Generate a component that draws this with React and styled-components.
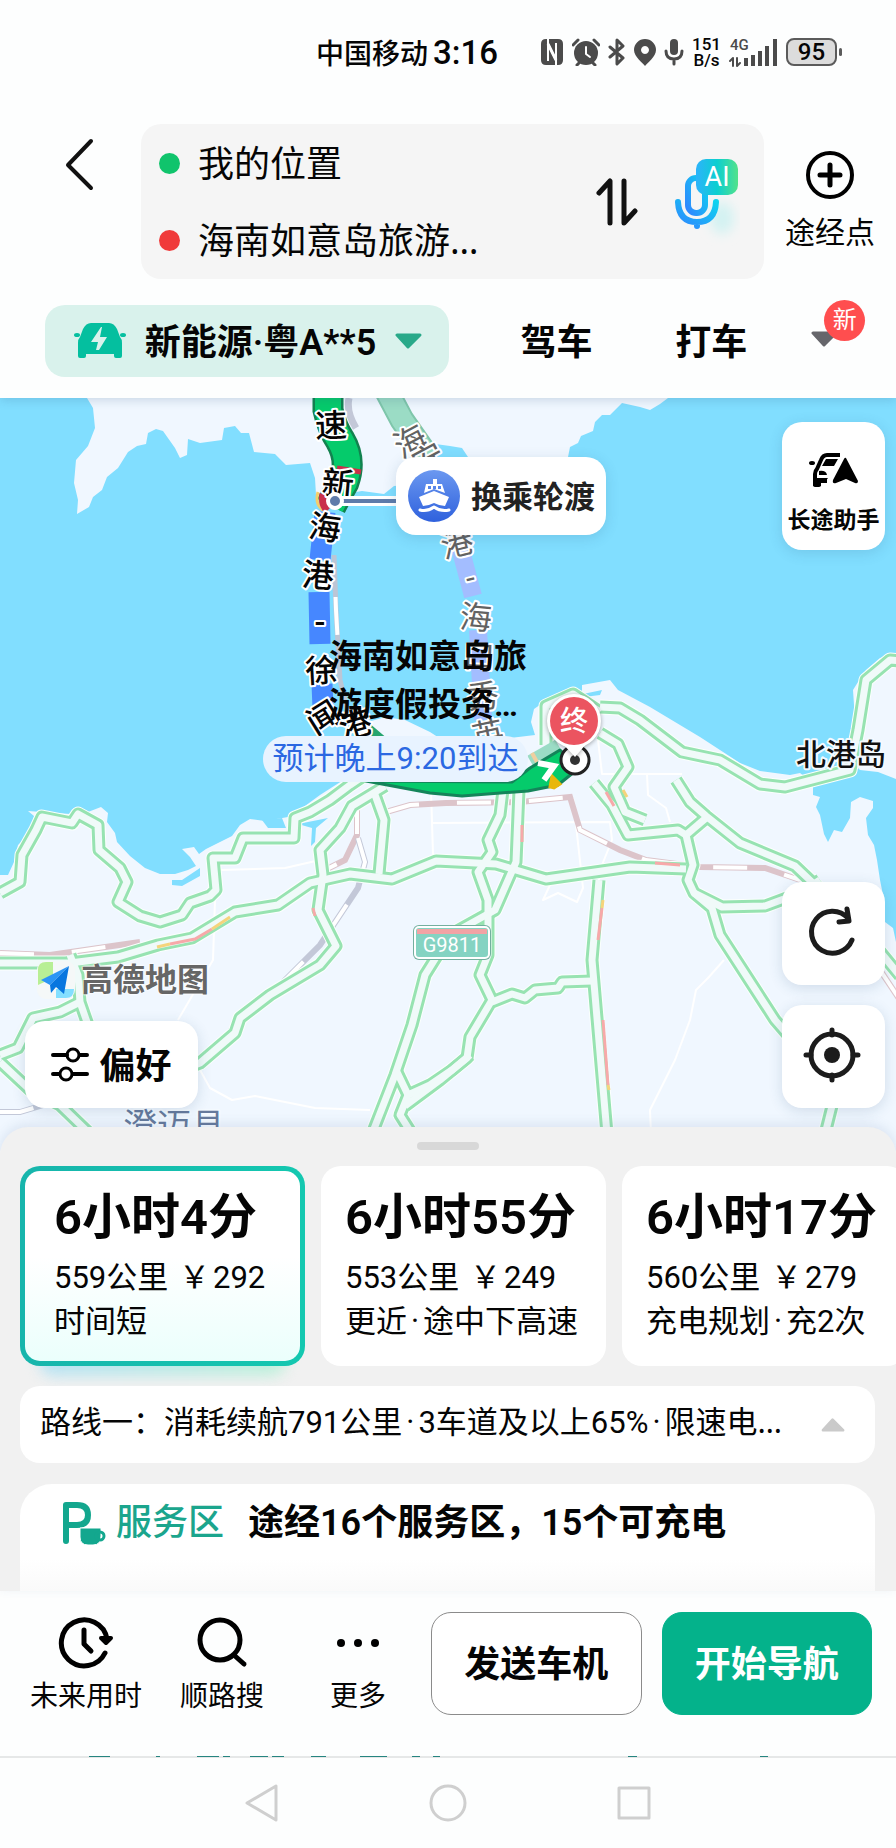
import React from "react";
import styled, { createGlobalStyle, css } from "styled-components";

const GlobalStyle = createGlobalStyle`
  * { box-sizing: border-box; }
  body {
    margin: 0;
    background: #fdfefe;
    color: #050505;
    font-family: Roboto, "Noto Sans CJK SC", sans-serif;
  }
  button {
    font: inherit;
    color: inherit;
    background: none;
    border: 0;
    padding: 0;
    cursor: pointer;
  }
  svg { display: block; flex: none; }
  h2, p { margin: 0; }
`;

const Page = styled.div`
  display: flex;
  flex-direction: column;
  min-height: 100vh;
  overflow: hidden;
`;

/* ---------- status bar ---------- */

const StatusBar = styled.div`
  display: flex;
  align-items: center;
  justify-content: flex-end;
  height: 104px;
  padding-right: 54px;
  color: #4b4b4b;
`;

const Carrier = styled.span`
  font-size: 28px;
  font-weight: 500;
  color: #050505;
`;

const Clock = styled.time`
  margin: 0 42px 0 5px;
  font-size: 33px;
  font-weight: 500;
  color: #050505;
`;

const StatusIcons = styled.div`
  display: flex;
  align-items: center;
  gap: 8px;
`;

const NetSpeed = styled.span`
  display: flex;
  flex-direction: column;
  font-size: 17px;
  font-weight: 500;
  line-height: 16px;
  text-align: center;
  color: #050505;
`;

const Battery = styled.span`
  position: relative;
  width: 51px;
  height: 28px;
  margin-right: 5px;
  border: 2px solid #5b5b5b;
  border-radius: 8px;
  background: #dcdcdc;
  font-size: 24px;
  font-weight: 500;
  line-height: 25px;
  text-align: center;
  color: #050505;
  &::after {
    content: "";
    position: absolute;
    right: -7px;
    top: 8px;
    width: 3px;
    height: 8px;
    border-radius: 2px;
    background: #5b5b5b;
  }
`;

/* ---------- header ---------- */

const Header = styled.header`
  position: relative;
  z-index: 2;
  background: #fdfefe;
  box-shadow: 0 2px 10px rgba(40, 80, 120, 0.2);
`;

const SearchRow = styled.div`
  display: flex;
  padding-top: 20px;
`;

const BackButton = styled.button`
  width: 141px;
  height: 82px;
  padding-left: 65px;
`;

const Places = styled.div`
  flex: 1;
  display: flex;
  align-items: center;
  min-width: 0;
  height: 155px;
  padding: 0 24px 0 18px;
  border-radius: 20px;
  background: #f5f5f5;
`;

const Fields = styled.div`
  flex: 1;
  min-width: 0;
`;

const Field = styled.label`
  display: flex;
  align-items: center;
  gap: 18px;
  height: 77px;
  &::before {
    content: "";
    width: 21px;
    height: 21px;
    border-radius: 50%;
    background: ${(p) => p.$dot};
  }
`;

const PlaceInput = styled.input`
  flex: 1;
  min-width: 0;
  padding: 0 0 4px;
  border: 0;
  outline: 0;
  background: none;
  color: inherit;
  font-family: "Noto Sans", "Noto Sans CJK SC", sans-serif;
  font-size: 36px;
`;

const IconButton = styled.button`
  margin-left: ${(p) => p.$gap || 0}px;
`;

const Waypoint = styled.button`
  display: flex;
  flex-direction: column;
  align-items: center;
  gap: 12px;
  width: 132px;
  padding-top: 27px;
  font-size: 30px;
  line-height: 44px;
`;

const ModeRow = styled.nav`
  display: flex;
  align-items: center;
  padding: 26px 36px 21px 45px;
`;

const VehiclePill = styled.button`
  display: flex;
  align-items: center;
  justify-content: space-between;
  width: 404px;
  height: 72px;
  padding: 0 27px 0 29px;
  border-radius: 20px;
  background: #d9f2ec;
`;

const Strong = styled.span`
  padding-bottom: 4px;
  font-size: 36px;
  font-weight: 600;
`;

const Modes = styled.div`
  display: flex;
  flex: 1;
  margin-left: 30px;
`;

const Mode = styled.button`
  flex: 154 0 0;
  padding-bottom: 4px;
  font-size: 36px;
  font-weight: 600;
`;

const MoreModes = styled.button`
  position: relative;
  display: flex;
  flex: 71 0 0;
  align-items: center;
  justify-content: center;
  padding-bottom: 4px;
`;

const NewBadge = styled.span`
  position: absolute;
  left: 50%;
  bottom: 50%;
  width: 41px;
  height: 41px;
  border-radius: 50%;
  background: #ff4e4f;
  color: #fff;
  font-size: 24px;
  line-height: 40px;
  text-align: center;
`;

/* ---------- map ---------- */

const Map = styled.main`
  position: relative;
  display: flex;
  justify-content: space-between;
  height: 753px;
  padding: 24px 11px 43px 25px;
  background: #f0f7ff;
`;

const MapCanvas = styled.svg`
  position: absolute;
  inset: 0;
  width: 100%;
  height: 100%;
`;

const Floating = css`
  position: relative;
  background: #fff;
  border-radius: 20px;
  box-shadow: 0 3px 14px rgba(40, 80, 120, 0.16);
`;

const LeftTools = styled.div`
  display: flex;
  flex-direction: column;
  align-items: flex-start;
  justify-content: flex-end;
  gap: 21px;
`;

const Brand = styled.div`
  position: relative;
  display: flex;
  align-items: center;
  gap: 6px;
  padding-left: 12px;
  color: #666;
  font-size: 32px;
  font-weight: 600;
  line-height: 40px;
  text-shadow: 0 0 2px #fff, 0 0 2px #fff, 0 0 3px #fff;
`;

const Preference = styled.button`
  ${Floating}
  display: flex;
  align-items: center;
  justify-content: center;
  gap: 10px;
  width: 173px;
  height: 87px;
`;

const RightTools = styled.div`
  display: flex;
  flex-direction: column;
  gap: 20px;
`;

const Assistant = styled.button`
  ${Floating}
  display: flex;
  flex-direction: column;
  align-items: center;
  gap: 16px;
  width: 103px;
  height: 128px;
  margin-bottom: auto;
  padding-top: 30px;
  font-size: 23px;
  font-weight: 600;
  line-height: 36px;
`;

const MapButton = styled.button`
  ${Floating}
  display: flex;
  align-items: center;
  justify-content: center;
  width: 103px;
  height: 103px;
  padding: 0 3px 3px 0;
`;

const FerryTip = styled.button`
  ${Floating}
  position: absolute;
  left: calc(50% - 52px);
  top: 59px;
  display: flex;
  align-items: center;
  gap: 10px;
  width: 210px;
  height: 78px;
  padding-left: 12px;
  color: #222;
  white-space: nowrap;
`;

const FerryText = styled.span`
  padding-bottom: 4px;
  font-size: 31px;
  font-weight: 600;
`;

const Arrival = styled.p`
  position: absolute;
  left: calc(50% - 185px);
  top: 338px;
  width: 265px;
  border-radius: 23px;
  background: #e8f3ff;
  color: #2b68e2;
  font-size: 31px;
  line-height: 46px;
  text-align: center;
  white-space: nowrap;
`;

/* ---------- bottom sheet ---------- */

const Sheet = styled.section`
  position: relative;
  margin-top: -24px;
  padding-top: 15px;
  border-radius: 28px 28px 0 0;
  background: #f1f1f1;
  box-shadow: 0 -3px 12px rgba(60, 90, 140, 0.12);
`;

const Handle = styled.div`
  width: 62px;
  height: 8px;
  margin: 0 auto 16px;
  border-radius: 4px;
  background: #d8d8d8;
`;

const Routes = styled.div`
  display: flex;
  gap: 16px;
  padding: 0 20px 20px;
  overflow-x: auto;
  scrollbar-width: none;
  isolation: isolate;
`;

const RouteCard = styled.button`
  position: relative;
  flex: none;
  width: 285px;
  height: 200px;
  padding: 0 24px;
  border-radius: 20px;
  background: #fff;
  text-align: left;
  white-space: nowrap;
  ${(p) =>
    p.$selected &&
    css`
      padding: 0 29px;
      border: 5px solid transparent;
      background: linear-gradient(#fff 45%, #ebfffc) padding-box,
        linear-gradient(90deg, #17b5ac, #14c8b0) border-box;
      &::after {
        content: "";
        position: absolute;
        z-index: -1;
        left: 14px;
        right: 14px;
        bottom: -15px;
        height: 30px;
        border-radius: 15px;
        background: linear-gradient(90deg, #b8e2f3, #bff0da);
        filter: blur(7px);
      }
    `}
`;

const Duration = styled.h2`
  margin-bottom: 8px;
  font-size: 49px;
  font-weight: 600;
  line-height: 60px;
`;

const RouteInfo = styled.p`
  font-size: 31px;
  line-height: 44px;
`;

const Price = styled.span`
  margin-left: 3px;
`;

const Yen = styled.span`
  margin-right: 3px;
`;

const Separator = styled.span`
  margin: 0 4px;
`;

const Ellipsis = styled.span`
  font-family: "Noto Sans", sans-serif;
  line-height: 1;
`;

const Summary = styled.button`
  display: flex;
  align-items: center;
  justify-content: space-between;
  width: calc(100% - 41px);
  height: 77px;
  margin: 0 21px 21px 20px;
  padding: 0 30px 0 20px;
  border-radius: 20px;
  background: #fff;
  white-space: nowrap;
`;

const SummaryText = styled.span`
  padding-bottom: 4px;
  font-size: 31px;
  line-height: 44px;
`;

const Service = styled.div`
  display: flex;
  align-items: flex-start;
  height: 107px;
  margin: 0 21px 0 20px;
  padding: 14px 42px;
  border-radius: 32px 32px 0 0;
  background: linear-gradient(#fff 70%, #fafafa);
  font-size: 36px;
  font-weight: 600;
  line-height: 50px;
  white-space: nowrap;
`;

const ServiceTag = styled.span`
  display: flex;
  align-items: center;
  gap: 10px;
  margin-right: 24px;
  color: #1ba58d;
  font-weight: 500;
`;

/* ---------- action bar ---------- */

const ActionBar = styled.footer`
  display: flex;
  align-items: flex-start;
  height: 165px;
  padding: 21px 24px 0 18px;
  background: #fdfefe;
`;

const Action = styled.button`
  display: flex;
  flex-direction: column;
  align-items: center;
  gap: 7px;
  width: 136px;
  padding-top: 4px;
  font-size: 28px;
  line-height: 40px;
`;

const MainButton = styled.button`
  flex: 1;
  height: 103px;
  margin-left: ${(p) => (p.$primary ? 20 : 5)}px;
  padding-bottom: 6px;
  border: 1px solid ${(p) => (p.$primary ? "#04b28b" : "#8b8b8b")};
  border-radius: 20px;
  background: ${(p) => (p.$primary ? "#04b28b" : "#fff")};
  color: ${(p) => (p.$primary ? "#fff" : "#050505")};
  font-size: 36px;
  font-weight: 600;
`;

const PeekLine = styled.svg`
  width: 100%;
  height: 2px;
  background: #e6e8e8;
`;

const SystemNav = styled.nav`
  display: flex;
  flex: 1;
  align-items: center;
  justify-content: center;
  gap: 146px;
  min-height: 90px;
  background: #fdfefe;
`;

const SystemKey = styled.button`
  display: flex;
  justify-content: center;
  width: 40px;
`;

/* ---------- map data ---------- */

const roads = [
  "0,893 20,882 22,855 36,830 42,817 72,823 78,814 98,825 99,850 120,868 127,882 118,902 140,916 160,922 182,915 190,903 210,896 216,890 213,858 235,858 243,838 294,838 295,818 310,812 330,800 350,785 375,768",
  "0,963 70,963 118,957 158,945 192,938 235,912 278,905 310,883 350,874 392,879 436,861 496,864 546,879 630,867 686,869",
  "385,786 352,806 340,828 320,850 323,875 318,910 336,946 320,965 270,995 240,1018 235,1033 200,1063 170,1075",
  "374,792 384,820 379,874",
  "503,790 500,815 488,840 492,852 478,872 488,900 488,955 480,975 492,1000 470,1037 467,1058 440,1080 405,1106",
  "519,790 516,862 495,910 450,935 425,975 412,1025 395,1075 372,1134",
  "599,880 592,960 607,1134",
  "397,1072 408,1095 430,1085 452,1070 470,1055",
  "408,1095 400,1115 412,1134",
  "492,1002 512,994 525,998 535,990 558,988 562,982 592,981",
  "600,707 620,708 640,720 682,752 720,760 760,784 785,787 850,770 858,730 866,680 890,660 900,661",
  "546,745 546,706 573,694 600,712",
  "600,733 618,744 628,767 614,787 625,812 645,820",
  "594,783 612,805 628,835 678,830 686,835 693,865 688,880 694,893 712,908 720,935 775,1020 840,1095",
  "676,780 690,802 706,816 740,843 795,866 815,885 850,915 900,976",
  "706,818 686,835",
  "694,893 722,907 765,906 800,893 820,880",
  "70,955 78,975 80,1002 88,1025",
  "0,1055 18,1048 33,1018 60,1012 82,1001",
  "0,1062 30,1090 60,1105 90,1134",
  "836,1090 825,1134",
];

const traffic = [
  ["#f7a9a9", "170,944 195,939 212,929"],
  ["#f5d47c", "157,947 170,944"],
  ["#f5d47c", "212,929 230,917"],
  ["#f7a9a9", "602,908 598,940"],
  ["#f5d47c", "603,900 602,908"],
  ["#f7a9a9", "603,1020 608,1085"],
  ["#f5d47c", "608,1085 609,1090"],
  ["#f7a9a9", "655,863 680,865"],
  ["#f7a9a9", "606,792 614,806"],
  ["#f5d47c", "623,790 627,797"],
  ["#f7a9a9", "313,908 315,916"],
  ["#f7a9a9", "522,825 522,842"],
];

const railways = [
  ["#dcc4ca", "0,953 50,955 140,942"],
  ["#dcc4ca", "357,800 357,835 345,860 325,870"],
  ["#dcc4ca", "386,812 410,805 446,803 520,802 570,797 580,830 620,850 646,860 700,867 765,868 800,880"],
  ["#dcc4ca", "880,970 900,1000"],
  ["#c3c8d8", "358,838 365,862 358,888 320,945 280,985 245,1010 228,1035 200,1058"],
  ["#c3c8d8", "0,1112 20,1112 50,1103"],
];

const lanes = [
  "220,870 285,868 320,860",
  "215,900 213,960 178,1020",
  "200,1070 210,1088 232,1100 255,1096 315,1108 370,1110",
  "431,790 433,855",
  "433,823 610,822 612,840 600,870 598,890",
  "573,798 583,888 577,902 558,893 543,900 550,885",
  "598,740 602,774 682,774",
  "647,774 648,795 666,808 670,822",
  "724,960 708,978 696,990 690,1020 675,1060 650,1110 651,1134",
];

const routeLabels = [
  ["速", 331, 425, -2],
  ["新", 338, 483, 5],
  ["海", 325, 527, 8],
  ["港", 318, 575, 4],
  ["-", 320, 621, 0],
  ["徐", 321, 670, -3],
  ["闻", 323, 717, -32],
  ["港", 355, 724, -16],
];

const altLabels = [
  ["海", 410, 441, -28],
  ["安", 428, 459, -28],
  ["港", 457, 543, -14],
  ["-", 470, 577, -14],
  ["海", 476, 617, 5],
  ["口", 479, 656, 2],
  ["秀", 483, 696, -4],
  ["英", 488, 734, -12],
];

function PathLabels({ items, fill, weight }) {
  return (
    <g fontSize="32" fontWeight={weight} textAnchor="middle" fill={fill} stroke="#fff" strokeWidth="4" strokeLinejoin="round" paintOrder="stroke">
      {items.map(([text, x, y, turn]) => (
        <text key={text + y} x={x} y={y} dy="12" transform={`rotate(${turn} ${x} ${y})`}>
          {text}
        </text>
      ))}
    </g>
  );
}

function Polylines({ items, ...rest }) {
  return (
    <g fill="none" strokeLinejoin="round" {...rest}>
      {items.map((points) => (
        <polyline key={points} points={points} />
      ))}
    </g>
  );
}

function MapDrawing() {
  return (
    <MapCanvas viewBox="0 398 896 753" preserveAspectRatio="xMidYMid slice" role="img" aria-label="路线地图">
      <rect x="-400" y="398" width="1700" height="753" fill="#81deff" />
      <g fill="#f0f7ff">
        <path d="M87 398 93 408 95 428 88 446 76 460 74 483 78 500 77 514 89 507 93 497 102 490 107 477 118 468 128 452 137 446 146 444 148 433 156 429 163 431 175 448 180 458 187 455 188 439 200 443 222 440 224 428 235 426 241 433 249 433 254 452 275 454 286 465 310 463 315 478 316 495 322 505 350 493 362 491 384 494 394 486 470 480 560 470 568 457 570 447 578 443 581 436 593 431 595 422 602 415 610 415 622 403 640 407 650 410 660 404 668 398Z" />
        <path d="M-400 1151V875H8L14 862 18 845 25 838 32 828 34 816 28 811 70 814 88 812 101 807 108 813 107 822 115 833 117 842 130 856 145 868 160 874 175 874 188 870 196 866 190 857 182 849 194 847 199 854 206 849 220 842 232 836 240 825 250 819 265 821 288 817 305 806 320 795 345 779 362 762 370 735 368 722 385 717 405 720 430 732 450 745 535 735 531 722 534 709 547 700 572 690 582 692 582 685 610 680 618 690 650 707 700 737 740 763 760 771 790 775 800 773 813 783 813 795 820 797 816 807 820 815 824 834 828 842 834 830 842 832 850 818 851 802 860 797 873 801 873 808 866 818 868 835 874 845 877 860 880 880 884 900 885 922 893 928 896 942H1300V1151Z" />
        <path d="M900 653 880 658 866 670 858 682 853 690 855 720 850 738 848 755 856 766 860 770 878 772 896 779H1300V653Z" />
      </g>
      <path d="M428 443 450 446 462 448 470 460 440 465Z M172 880 182 880 200 868 200 876 182 886 172 885Z M262 820 282 818 286 828 268 828Z M298 824 328 818 316 828 315 842 311 846 312 828Z M583 694 602 690 600 695 584 697Z" fill="#81deff" />
      <path d="M436 457 450 450" stroke="#81deff" strokeWidth="6" />

      <Polylines items={lanes} stroke="#fff" strokeWidth="2" />
      {railways.map(([color, points]) => (
        <g key={points} fill="none">
          <polyline points={points} stroke={color} strokeWidth="6" />
          <polyline points={points} stroke="#fff" strokeWidth="4" strokeDasharray="34 38" />
        </g>
      ))}
      <Polylines items={roads} stroke="#fbfffd" strokeWidth="15" />
      <Polylines items={roads} stroke="#97e3b1" strokeWidth="13" />
      <Polylines items={roads} stroke="#f0faf9" strokeWidth="7" />
      {traffic.map(([color, points]) => (
        <polyline key={points} points={points} fill="none" stroke={color} strokeWidth="3" />
      ))}

      {/* alternative route */}
      <g fill="none">
        <path d="M384 386 402 420 430 460" stroke="#7fc6ab" strokeWidth="25" />
        <path d="M384 386 402 420 430 460" stroke="#9bdcc5" strokeWidth="21" />
        <path d="M458 540 473 596M478 630 483 720" stroke="#a3bdff" strokeWidth="18" />
        <path d="M532 764 560 748" stroke="#9bdcc5" strokeWidth="19" />
        <path d="M532 753 537 762" stroke="#f0cfa0" strokeWidth="4" />
      </g>

      {/* ferry line beside the chosen route */}
      <g fill="none">
        <path d="M349 398Q346 412 356 428" stroke="#c3c8d8" strokeWidth="7" />
        <path d="M334 555 336 610 340 680 350 720" stroke="#bcc6d6" strokeWidth="5" />
        <path d="M334 555 336 610 340 680 350 720" stroke="#fff" strokeWidth="4" strokeDasharray="0 42 38 38" />
        <path d="M328 386V410Q332 428 340 440 352 460 344 482 336 496 331 506" stroke="#12824f" strokeWidth="31" />
        <path d="M328 386V410Q332 428 340 440 352 460 344 482 336 496 331 506" stroke="#05cb6b" strokeWidth="26" />
        <path d="M337 468 361 472" stroke="#c9304a" strokeWidth="5" />
        <path d="M318 492Q314 506 326 512" stroke="#f3ce6b" strokeWidth="3" />
        <path d="M324 494Q322 504 328 510" stroke="#c9304a" strokeWidth="9" />
        <path d="M325 512 320 560M319 592 320 644M322 684 323 708" stroke="#4687ff" strokeWidth="21" />
      </g>
      <path d="M352 716 368 728 382 740" stroke="#26a56f" strokeWidth="9" />
      <path d="M366 781 512 782 530 768 560 750 579 768 558 785 528 791 462 796 430 793Z" fill="#05cb6b" stroke="#14845a" strokeWidth="3" strokeLinejoin="round" />
      <path d="M552 776 560 784 554 788 550 787Z" fill="#e8b70c" stroke="#e8b70c" strokeWidth="3" />
      <path d="M538 763 554 766 544 780" fill="none" stroke="#fff" strokeWidth="6" />

      <PathLabels items={altLabels} fill="#626262" weight="400" />
      <PathLabels items={routeLabels} fill="#050505" weight="500" />

      <path d="M340 501H396" stroke="#fff" strokeWidth="10" />
      <path d="M340 501H396" stroke="#5e7baa" strokeWidth="4" />
      <circle cx="335" cy="501" r="7" fill="#5e7baa" stroke="#fff" strokeWidth="4" />

      <g fontSize="33" fontWeight="600" fill="#050505">
        <text x="329" y="668">海南如意岛旅</text>
        <text x="329" y="716">游度假投资…</text>
      </g>

      <circle cx="575" cy="760" r="14" fill="#fff" stroke="#222" strokeWidth="3" />
      <circle cx="575" cy="760" r="5" fill="#333" />
      <g filter="drop-shadow(0 1px 2px rgba(0,0,0,.35))">
        <circle cx="574" cy="721" r="27" fill="#fff" />
        <path d="M562 743 575 757 587 743Z" fill="#fff" />
      </g>
      <circle cx="574" cy="721" r="24" fill="#eb5460" />
      <text x="574" y="731" fontSize="28" fontWeight="500" textAnchor="middle" fill="#fff">终</text>

      <g stroke="#f4faff" strokeWidth="4" paintOrder="stroke" strokeLinejoin="round">
        <text x="796" y="765" fontSize="30" fontWeight="500" fill="#111">北港岛</text>
        <text x="123" y="1138" fontSize="34" fill="#667a9c">澄迈县</text>
      </g>

      <rect x="413" y="925" width="78" height="35" rx="6" fill="#74af9f" />
      <rect x="415" y="927" width="74" height="31" rx="4" fill="#85d3c2" stroke="#fff" strokeWidth="2" />
      <path d="M417 929H487V934H417Z" fill="#f2a3a5" />
      <text x="452" y="952" fontSize="20" textAnchor="middle" fill="#fff">G9811</text>
    </MapCanvas>
  );
}

/* ---------- icons ---------- */

const stroke = (width, color = "#111") => ({
  fill: "none",
  stroke: color,
  strokeWidth: width,
  strokeLinecap: "round",
  strokeLinejoin: "round",
});

function StatusGlyphs() {
  return (
    <>
      <svg width="24" height="28" viewBox="0 0 24 28">
        <path d="M6 1H18Q23 1 23 6V22Q23 27 18 27H6Q1 27 1 22V6Q1 1 6 1Z" fill="currentColor" />
        <path d="M8 23V6L16 22V5" fill="none" stroke="#fdfefe" strokeWidth="2" />
        <path d="M8 6 16 22" fill="none" stroke="#fdfefe" strokeWidth="3" />
        <path d="M8 0V6M16 22V28" fill="none" stroke="#fdfefe" strokeWidth="2" />
      </svg>
      <svg width="28" height="28" viewBox="0 0 28 28">
        <circle cx="14" cy="15" r="12" fill="currentColor" />
        <path d="M1 7 6 2M27 7 22 2M5 27 8 24M23 27 20 24" {...stroke(3, "currentColor")} />
        <path d="M14 9V16L18 19" {...stroke(2, "#fff")} />
      </svg>
      <svg width="18" height="28" viewBox="0 0 18 28">
        <path d="M2 9 15 20 9 26V2L15 8 2 19" {...stroke(3, "currentColor")} />
      </svg>
      <svg width="22" height="28" viewBox="0 0 22 28" fill="currentColor">
        <path fillRule="evenodd" d="M11 1A11 11 0 0 1 22 12C22 19 13 25 11 28 9 25 0 19 0 12A11 11 0 0 1 11 1ZM11 8a4 4 0 1 0 .01 0Z" />
      </svg>
      <svg width="20" height="28" viewBox="0 0 20 28">
        <rect x="6" y="1" width="8" height="16" rx="4" fill="currentColor" />
        <path d="M2 13Q2 21 10 21 18 21 18 13M10 21V26" {...stroke(3, "currentColor")} />
      </svg>
    </>
  );
}

function Signal() {
  return (
    <svg width="49" height="36" viewBox="0 -4 49 36" fill="currentColor">
      <text x="1" y="12" fontSize="15" fontWeight="500">4G</text>
      <path d="M15 20h4v8h-4zM22 17h4v11h-4zM29 13h4v15h-4zM36 8h4v20h-4zM44 1h4v27h-4z" />
      <path d="M1 23 4 20V28M8 20V28L11 25" {...stroke(2, "currentColor")} />
    </svg>
  );
}

function AiMic() {
  return (
    <svg width="66" height="88" viewBox="0 0 66 88">
      <defs>
        <linearGradient id="mic" x1="0" y1="1" x2="1" y2="0">
          <stop offset="0" stopColor="#2f86ff" />
          <stop offset="1" stopColor="#0fd3ef" />
        </linearGradient>
        <linearGradient id="ai">
          <stop offset="0" stopColor="#2db3fb" />
          <stop offset=".5" stopColor="#0ccfd0" />
          <stop offset="1" stopColor="#53e28a" />
        </linearGradient>
        <filter id="soft" x="-50%" y="-50%" width="200%" height="200%">
          <feGaussianBlur stdDeviation="6" />
        </filter>
      </defs>
      <ellipse cx="48" cy="60" rx="12" ry="16" fill="#d3f2f2" filter="url(#soft)" />
      <rect x="14" y="20" width="17" height="35" rx="8" {...stroke(6, "url(#mic)")} />
      <path d="M4 44Q5 64 23 64 41 64 42 44M23 64V68" {...stroke(6, "url(#mic)")} />
      <rect x="22" y="1" width="42" height="36" rx="10" fill="url(#ai)" />
      <text x="43" y="28" fontSize="27" textAnchor="middle" fill="#fff">AI</text>
    </svg>
  );
}

function EvCar() {
  return (
    <svg width="52" height="36" viewBox="0 0 52 36" fill="#04bf9f">
      <path d="M17 0H35Q40 0 43 6L46 14Q48 16 48 20V33Q48 35 46 35H42Q40 35 40 33V31H12V33Q12 35 10 35H6Q4 35 4 33V20Q4 16 6 14L9 6Q12 0 17 0Z" />
      <ellipse cx="3" cy="12" rx="3" ry="2" />
      <ellipse cx="49" cy="12" rx="3" ry="2" />
      <path d="M27 4 17 19H24L22 27H25L33 14H26L28 4Z" fill="#d9f2ec" />
    </svg>
  );
}

function AssistantIcon() {
  return (
    <svg width="50" height="35" viewBox="0 0 50 35">
      <path d="M31 3H18Q14 3 12 8L8 17Q6 19 6 22V33H10V29H18" fill="none" stroke="#000" strokeWidth="4" strokeLinejoin="round" />
      <path d="M17 7H29L25 14H13ZM10 19Q17 18 18 23H10ZM5 26H19L16 30H12V34H4Z" />
      <ellipse cx="3" cy="11" rx="3" ry="2" />
      <path d="M37 6 49 29Q49 32 46 31L37 27 27 31Q23 32 24 28L35 7Q36 5 37 6Z" />
    </svg>
  );
}

function Ship() {
  return (
    <svg width="53" height="53" viewBox="0 0 53 53">
      <defs>
        <linearGradient id="ship" x1="0" y1="0" x2="0" y2="1">
          <stop offset="0" stopColor="#6b98f0" />
          <stop offset="1" stopColor="#2f61dd" />
        </linearGradient>
      </defs>
      <circle cx="26" cy="26" r="26" fill="url(#ship)" />
      <path fill="#fff" fillRule="evenodd" d="M25 9H29V14H34L37 23 26 19 16 23 18 14H25ZM20 16V19H23V16ZM25 16V19H28V16ZM30 16V19H33V16Z" />
      <path fill="#fff" d="M26 21 41 27 37 36Q32 36 26 33 20 36 15 36L11 27Z" />
      <path d="M12 40Q19 42 26 37 33 42 41 40" {...stroke(3, "#fff")} />
    </svg>
  );
}

function BrandMark() {
  return (
    <svg width="38" height="38" viewBox="0 0 38 38">
      <rect width="38" height="38" rx="9" fill="#f5f8f8" />
      <path d="M9 1H16V17L1 24V9Q1 1 9 1Z" fill="#b8ef95" />
      <path d="M19 28H37Q37 37 29 37H19Z" fill="#84dfff" />
      <path d="M32 5 4 19 13 24Z" fill="#2b95f5" />
      <path d="M32 5 13 24 14 32 19 26 27 33Z" fill="#0876df" />
    </svg>
  );
}

function ServiceIcon() {
  return (
    <svg width="44" height="44" viewBox="0 0 44 44">
      <path d="M4 40V4H15Q26 4 26 14 26 24 15 24H4" {...stroke(6, "#13a78e")} />
      <path d="M18 27H39V35Q39 44 31 44H26Q18 44 18 36Z" fill="#13a78e" stroke="#fff" strokeWidth="1" />
      <circle cx="38" cy="35" r="4" {...stroke(3, "#13a78e")} />
    </svg>
  );
}

function Triangle({ width, height, color, up }) {
  return (
    <svg width={width} height={height} viewBox="0 0 27 16">
      <path d={up ? "M13 2 25 14H2Z" : "M2 2H25L13 14Z"} fill={color} stroke={color} strokeWidth="3" strokeLinejoin="round" />
    </svg>
  );
}

const routes = [
  { time: "6小时4分", distance: "559公里", price: 292, notes: ["时间短"], selected: true },
  { time: "6小时55分", distance: "553公里", price: 249, notes: ["更近", "途中下高速"] },
  { time: "6小时17分", distance: "560公里", price: 279, notes: ["充电规划", "充2次"] },
];

function Dotted({ parts }) {
  return parts.map((part, i) => (
    <React.Fragment key={part}>
      {i > 0 && <Separator>·</Separator>}
      {part}
    </React.Fragment>
  ));
}

export default function App() {
  return (
    <Page>
      <GlobalStyle />
      <Header>
        <StatusBar>
          <Carrier>中国移动</Carrier>
          <Clock>3:16</Clock>
          <StatusIcons>
            <StatusGlyphs />
            <NetSpeed>
              151
              <br />
              B/s
            </NetSpeed>
            <Signal />
            <Battery>95</Battery>
          </StatusIcons>
        </StatusBar>
        <SearchRow>
          <BackButton aria-label="返回">
            <svg width="30" height="54" viewBox="0 0 30 54">
              <path d="M26 3 3 27 26 50" {...stroke(4)} />
            </svg>
          </BackButton>
          <Places>
            <Fields>
              <Field $dot="#10c46c">
                <PlaceInput aria-label="起点" defaultValue="我的位置" />
              </Field>
              <Field $dot="#f03a3a">
                <PlaceInput aria-label="终点" defaultValue="海南如意岛旅游…" />
              </Field>
            </Fields>
            <IconButton aria-label="交换起终点">
              <svg width="42" height="50" viewBox="0 0 42 50">
                <path d="M3 16 14 4V46M28 4V46L39 34" {...stroke(5)} />
              </svg>
            </IconButton>
            <IconButton aria-label="语音助手" $gap={36}>
              <AiMic />
            </IconButton>
          </Places>
          <Waypoint>
            <svg width="48" height="48" viewBox="0 0 48 48">
              <circle cx="24" cy="24" r="22" {...stroke(4, "#000")} />
              <path d="M24 14V34M14 24H34" {...stroke(5, "#000")} />
            </svg>
            途经点
          </Waypoint>
        </SearchRow>
        <ModeRow>
          <VehiclePill>
            <EvCar />
            <Strong>新能源·粤A**5</Strong>
            <Triangle width={27} height={16} color="#29a989" />
          </VehiclePill>
          <Modes>
            <Mode>驾车</Mode>
            <Mode>打车</Mode>
            <MoreModes aria-label="更多出行方式">
              <Triangle width={27} height={16} color="#66666b" />
              <NewBadge>新</NewBadge>
            </MoreModes>
          </Modes>
        </ModeRow>
      </Header>

      <Map>
        <MapDrawing />
        <FerryTip>
          <Ship />
          <FerryText>换乘轮渡</FerryText>
        </FerryTip>
        <Arrival>预计晚上9:20到达</Arrival>
        <LeftTools>
          <Brand>
            <BrandMark />
            高德地图
          </Brand>
          <Preference>
            <svg width="38" height="36" viewBox="0 0 38 36">
              <path d="M2 8H16M29 8H36M2 27H8M22 27H36" {...stroke(4, "#000")} />
              <circle cx="22" cy="8" r="6" {...stroke(3, "#000")} />
              <circle cx="15" cy="27" r="6" {...stroke(3, "#000")} />
            </svg>
            <Strong>偏好</Strong>
          </Preference>
        </LeftTools>
        <RightTools>
          <Assistant>
            <AssistantIcon />
            长途助手
          </Assistant>
          <MapButton aria-label="刷新">
            <svg width="50" height="52" viewBox="0 0 50 52">
              <path d="M45 34A21 21 0 1 1 41 12" {...stroke(5, "#1c1c1c")} />
              <path d="M40 3 42 15 32 16" {...stroke(5, "#1c1c1c")} />
            </svg>
          </MapButton>
          <MapButton aria-label="定位">
            <svg width="58" height="56" viewBox="0 0 58 56">
              <circle cx="29" cy="28" r="21" {...stroke(5, "#1c1c1c")} />
              <circle cx="29" cy="28" r="8" fill="#1c1c1c" />
              <path d="M29 3V8M29 48V53M3 28H8M50 28H55" {...stroke(5, "#1c1c1c")} />
            </svg>
          </MapButton>
        </RightTools>
      </Map>

      <Sheet>
        <Handle />
        <Routes>
          {routes.map((r) => (
            <RouteCard key={r.time} $selected={r.selected}>
              <Duration>{r.time}</Duration>
              <RouteInfo>
                {r.distance} <Price><Yen>￥</Yen>{r.price}</Price>
              </RouteInfo>
              <RouteInfo>
                <Dotted parts={r.notes} />
              </RouteInfo>
            </RouteCard>
          ))}
        </Routes>
        <Summary>
          <SummaryText>
            <Dotted parts={["路线一：消耗续航791公里", "3车道及以上65%", "限速电"]} />
            <Ellipsis>…</Ellipsis>
          </SummaryText>
          <Triangle up width={24} height={14} color="#cacaca" />
        </Summary>
        <Service>
          <ServiceTag>
            <ServiceIcon />
            服务区
          </ServiceTag>
          途经16个服务区，15个可充电
        </Service>
      </Sheet>

      <ActionBar>
        <Action>
          <svg width="56" height="54" viewBox="0 0 56 54">
            <path d="M47 37A23 23 0 1 1 49 23" {...stroke(5, "#000")} />
            <path d="M43 22 48 27 53 22Z" fill="#000" stroke="#000" strokeWidth="4" strokeLinejoin="round" />
            <path d="M26 14V28L33 35" {...stroke(5, "#000")} />
          </svg>
          未来用时
        </Action>
        <Action>
          <svg width="52" height="54" viewBox="0 0 52 54">
            <circle cx="24" cy="24" r="20" {...stroke(5, "#000")} />
            <path d="M39 40 48 48" {...stroke(5, "#000")} />
          </svg>
          顺路搜
        </Action>
        <Action>
          <svg width="44" height="54" viewBox="0 0 44 54">
            <circle cx="5" cy="27" r="4" />
            <circle cx="22" cy="27" r="4" />
            <circle cx="39" cy="27" r="4" />
          </svg>
          更多
        </Action>
        <MainButton>发送车机</MainButton>
        <MainButton $primary>开始导航</MainButton>
      </ActionBar>
      <PeekLine viewBox="0 0 896 2" preserveAspectRatio="none" aria-hidden="true">
        <path d="M89 0H110M156 0H160M197 0H219M223 0H230M250 0H268M272 0H284M311 0H326M360 0H387M412 0H420M433 0H440M628 0H637M760 0H768" stroke="#268580" strokeWidth="2" />
      </PeekLine>
      <SystemNav>
        <SystemKey aria-label="返回">
          <svg width="36" height="40" viewBox="0 0 36 40">
            <path d="M32 3V37L3 20Z" {...stroke(3, "#cfcfcf")} />
          </svg>
        </SystemKey>
        <SystemKey aria-label="主屏幕">
          <svg width="38" height="38" viewBox="0 0 38 38">
            <circle cx="19" cy="19" r="17" {...stroke(3, "#cfcfcf")} />
          </svg>
        </SystemKey>
        <SystemKey aria-label="最近任务">
          <svg width="34" height="34" viewBox="0 0 34 34">
            <rect x="2" y="2" width="30" height="30" {...stroke(3, "#cfcfcf")} />
          </svg>
        </SystemKey>
      </SystemNav>
    </Page>
  );
}
